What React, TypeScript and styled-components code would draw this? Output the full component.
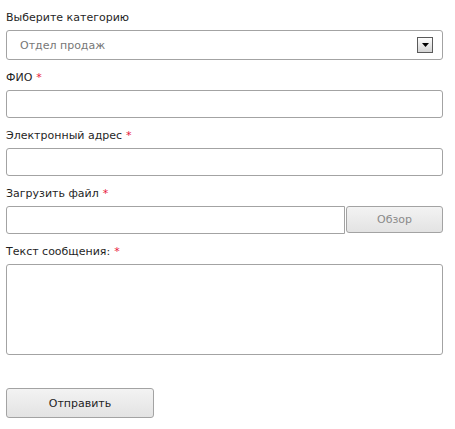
import * as React from "react";
import styled, { createGlobalStyle } from "styled-components";

const GlobalStyle = createGlobalStyle`
  body {
    margin: 0;
    background: #ffffff;
    font-family: "DejaVu Sans", Verdana, sans-serif;
    font-size: 11px;
    color: #222222;
  }
`;

const Form = styled.form`
  width: 437px;
  padding: 8px 0 0 6px;
  display: flex;
  flex-direction: column;
`;

const Field = styled.div<{ $first?: boolean }>`
  display: flex;
  flex-direction: column;
  margin-top: ${(p) => (p.$first ? 0 : 8)}px;
`;

const Label = styled.label`
  display: block;
  line-height: 19px;
  height: 19px;
  margin-bottom: 3px;
  color: #1f1f1f;
`;

const Star = styled.span`
  color: #e8173a;
  margin-left: 4px;
`;

const SelectBox = styled.div`
  box-sizing: border-box;
  height: 30px;
  border: 1px solid #a3a3a3;
  border-radius: 3px;
  display: flex;
  align-items: center;
  justify-content: space-between;
  padding: 0 9px 0 13px;
  color: #777777;
  background: #fff;
`;

const ArrowBox = styled.span`
  box-sizing: border-box;
  width: 16px;
  height: 16px;
  border: 1px solid #5a5a5a;
  background: linear-gradient(#fdfdfd, #d4d4d4);
  display: flex;
  align-items: center;
  justify-content: center;
`;

const Input = styled.input`
  box-sizing: border-box;
  height: 28px;
  width: 100%;
  border: 1px solid #a3a3a3;
  border-radius: 3px;
  padding: 0 8px;
  font: inherit;
  outline: none;
`;

const FileRow = styled.div`
  display: flex;
`;

const FileInput = styled(Input)`
  flex: 1;
  border-radius: 3px 0 0 3px;
`;

const Button = styled.button<{ $muted?: boolean; $width: number; $height: number }>`
  box-sizing: border-box;
  width: ${(p) => p.$width}px;
  height: ${(p) => p.$height}px;
  border: 1px solid #a3a3a3;
  border-radius: 3px;
  background: linear-gradient(#f3f3f3, #e3e3e3);
  font: inherit;
  color: ${(p) => (p.$muted ? "#8a8a8a" : "#1f1f1f")};
  padding: 0;
`;

const BrowseButton = styled(Button)`
  margin-left: 1px;
`;

const TextArea = styled.textarea`
  box-sizing: border-box;
  height: 91px;
  width: 100%;
  border: 1px solid #a3a3a3;
  border-radius: 3px;
  resize: none;
  font: inherit;
  outline: none;
`;

const Actions = styled.div`
  margin-top: 33px;
`;

const Required = () => <Star>*</Star>;

export default function App() {
  return (
    <>
      <GlobalStyle />
      <Form onSubmit={(e) => e.preventDefault()}>
        <Field $first>
          <Label>Выберите категорию</Label>
          <SelectBox>
            <span>Отдел продаж</span>
            <ArrowBox>
              <svg width="7" height="4" viewBox="0 0 7 4">
                <path d="M0 0H7L3.5 4Z" fill="#000" />
              </svg>
            </ArrowBox>
          </SelectBox>
        </Field>
        <Field>
          <Label>
            ФИО<Required />
          </Label>
          <Input />
        </Field>
        <Field>
          <Label>
            Электронный адрес<Required />
          </Label>
          <Input />
        </Field>
        <Field>
          <Label>
            Загрузить файл<Required />
          </Label>
          <FileRow>
            <FileInput />
            <BrowseButton type="button" $muted $width={97} $height={27}>
              Обзор
            </BrowseButton>
          </FileRow>
        </Field>
        <Field>
          <Label>
            Текст сообщения:<Required />
          </Label>
          <TextArea />
        </Field>
        <Actions>
          <Button type="submit" $width={148} $height={30}>
            Отправить
          </Button>
        </Actions>
      </Form>
    </>
  );
}
